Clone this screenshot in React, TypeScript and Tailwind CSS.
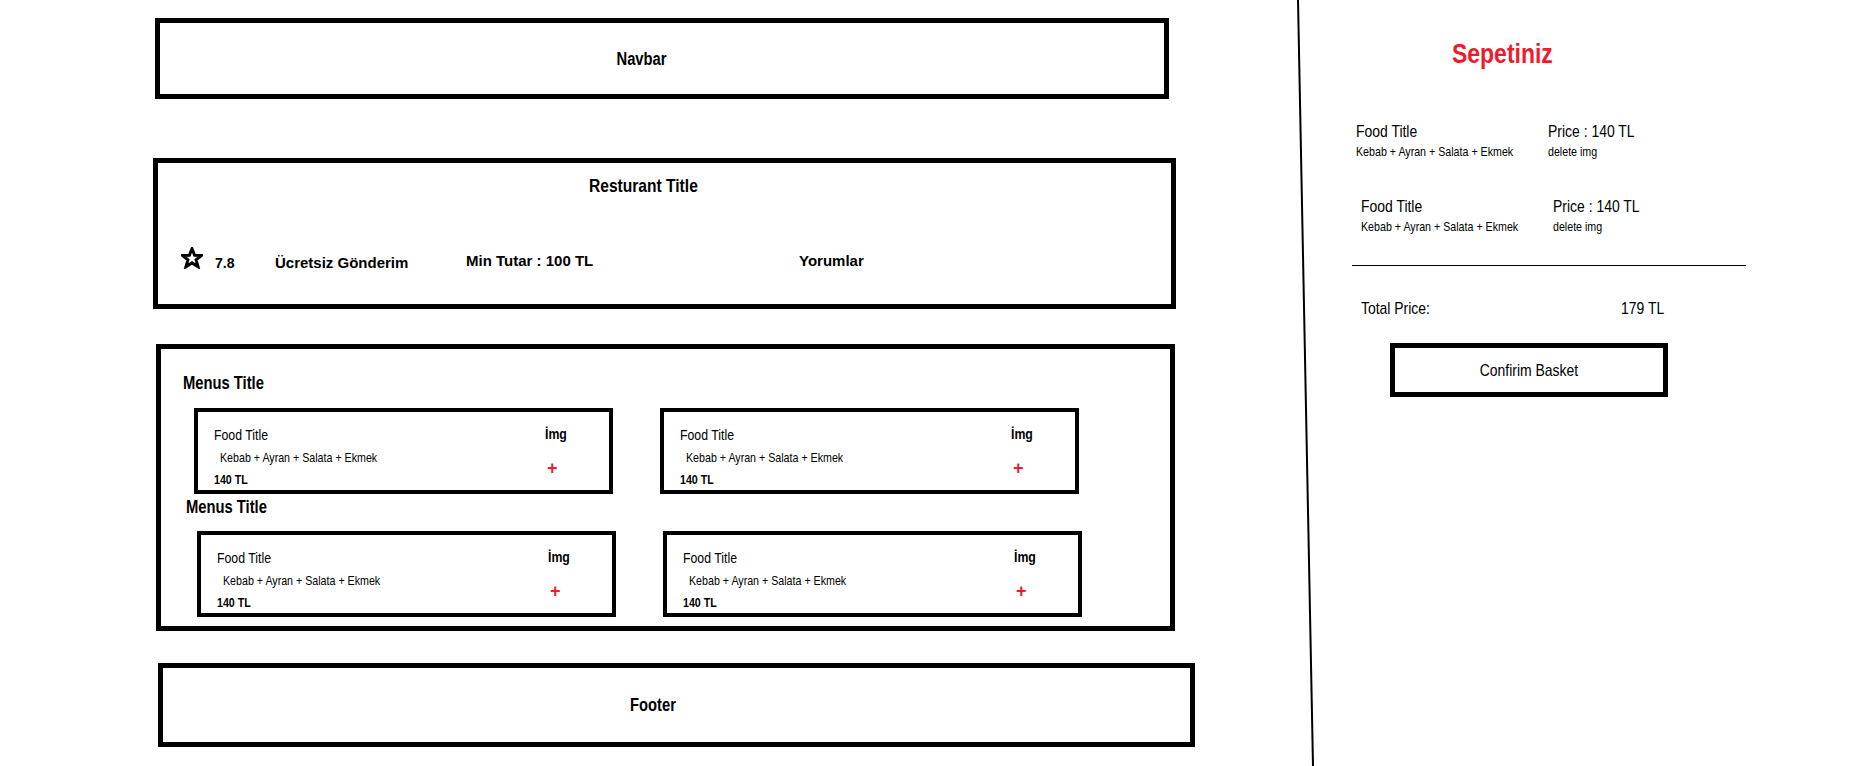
import React from "react";

const A = "font-['Liberation_Sans',Arial,sans-serif]";
const NL = "font-['Liberation_Sans',Arial,sans-serif] inline-block whitespace-nowrap leading-none scale-x-[0.82] origin-left";
const NC = "font-['Liberation_Sans',Arial,sans-serif] inline-block whitespace-nowrap leading-none scale-x-[0.82] origin-center";

function Star() {
  return (
    <svg width="22" height="22" viewBox="0 0 22 22" className="shrink-0">
      <polygon
        points="11,1.8 13.6,8.3 20.4,8.5 15.1,12.8 17.1,19.8 11,15.9 4.9,19.8 6.9,12.8 1.6,8.5 8.4,8.3"
        fill="white"
        stroke="black"
        strokeWidth="3"
        strokeLinejoin="miter"
      />
    </svg>
  );
}

function FoodCard() {
  return (
    <div className="flex w-[419px] h-[86px] border-4 border-black shrink-0">
      <div className="flex flex-col items-start flex-1 pl-[16px] pt-[15px]">
        <span className={`${NL} text-[15px]`}>Food Title</span>
        <span className={`${NL} text-[13px] mt-[9px] ml-[6px]`}>Kebab + Ayran + Salata + Ekmek</span>
        <span className={`${NL} text-[13px] font-bold mt-[9px]`}>140 TL</span>
      </div>
      <div className="w-[64px] flex flex-col items-start pt-[14px]">
        <span className={`${NL} text-[15px] font-bold`}>İmg</span>
        <span className={`${A} text-[18px] font-bold leading-none text-[#ec1c2e] mt-[18px] ml-[2px]`}>+</span>
      </div>
    </div>
  );
}

function CartItem({ offset }: { offset: string }) {
  return (
    <div className={`flex ${offset}`}>
      <div className="w-[192px] flex flex-col items-start">
        <span className={`${NL} text-[17px]`}>Food Title</span>
        <span className={`${NL} text-[13px] mt-[5px]`}>Kebab + Ayran + Salata + Ekmek</span>
      </div>
      <div className="flex flex-col items-start">
        <span className={`${NL} text-[17px]`}>Price : 140 TL</span>
        <span className={`${NL} text-[13px] mt-[5px]`}>delete img</span>
      </div>
    </div>
  );
}

export default function App() {
  return (
    <div className="flex w-[1854px] h-[766px] overflow-hidden bg-white text-black">
      {/* Left column */}
      <div className="w-[1297px] shrink-0 flex flex-col items-start">
        <div className="ml-[155px] mt-[18px] w-[1014px] h-[81px] border-[5px] border-black flex items-center justify-center pr-[40px]">
          <span className={`${NC} text-[18px] font-bold`}>Navbar</span>
        </div>

        <div className="ml-[153px] mt-[59px] w-[1023px] h-[151px] border-[5px] border-black flex flex-col items-start">
          <span className={`${NL} text-[19px] font-bold mt-[13px] ml-[431px]`}>Resturant Title</span>
          <div className="flex items-start mt-[52px] ml-[23px]">
            <Star />
            <span className={`${A} text-[14px] font-bold leading-none w-[72px] pl-[12px] mt-[9px]`}>7.8</span>
            <span className={`${A} text-[15px] font-bold leading-none w-[191px] mt-[8px]`}>Ücretsiz Gönderim</span>
            <span className={`${A} text-[15px] font-bold leading-none w-[333px] mt-[6px]`}>Min Tutar : 100 TL</span>
            <span className={`${A} text-[15px] font-bold leading-none mt-[6px]`}>Yorumlar</span>
          </div>
        </div>

        <div className="ml-[156px] mt-[35px] w-[1019px] h-[287px] border-[5px] border-black flex flex-col items-start pl-[22px]">
          <span className={`${NL} text-[18px] font-bold mt-[25px]`}>Menus Title</span>
          <div className="flex gap-[47px] mt-[16px] ml-[11px]">
            <FoodCard />
            <FoodCard />
          </div>
          <span className={`${NL} text-[18px] font-bold mt-[4px] ml-[3px]`}>Menus Title</span>
          <div className="flex gap-[47px] mt-[15px] ml-[14px]">
            <FoodCard />
            <FoodCard />
          </div>
        </div>

        <div className="ml-[158px] mt-[32px] w-[1037px] h-[84px] border-[5px] border-black flex items-center justify-center pr-[47px]">
          <span className={`${NC} text-[18px] font-bold`}>Footer</span>
        </div>
      </div>

      {/* Divider */}
      <svg width="18" height="766" className="shrink-0">
        <line x1="1" y1="0" x2="16" y2="766" stroke="black" strokeWidth="2" />
      </svg>

      {/* Right column: basket */}
      <div className="flex-1 flex flex-col items-start">
        <span className={`${NL} text-[28px] font-bold text-[#ec1c2e] mt-[40px] ml-[137px]`}>Sepetiniz</span>
        <div className="mt-[55px]">
          <CartItem offset="ml-[41px]" />
        </div>
        <div className="mt-[40px]">
          <CartItem offset="ml-[46px]" />
        </div>
        <div className="ml-[37px] mt-[32px] w-[394px] h-px bg-black" />
        <div className="flex ml-[46px] mt-[34px]">
          <span className={`${NL} text-[17px] w-[260px]`}>Total Price:</span>
          <span className={`${NL} text-[17px]`}>179 TL</span>
        </div>
        <div className="ml-[75px] mt-[26px] w-[278px] h-[54px] border-[5px] border-black flex items-center justify-center">
          <span className={`${NC} text-[17px]`}>Confirim Basket</span>
        </div>
      </div>
    </div>
  );
}
